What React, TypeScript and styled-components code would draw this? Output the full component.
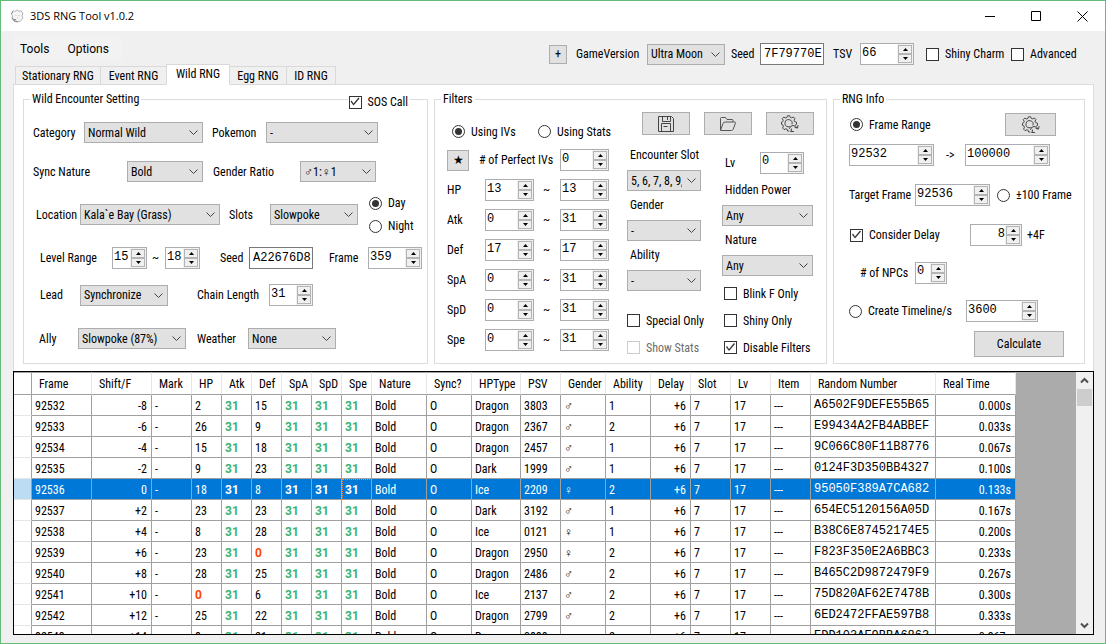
import React, { useState } from "react";
import styled, { createGlobalStyle, css } from "styled-components";

const UI_FONT = `"Roboto Condensed", Roboto, "Liberation Sans", sans-serif`;
const MONO_FONT = `"Liberation Mono", "DejaVu Sans Mono", monospace`;

const GlobalStyle = createGlobalStyle`
  *, *::before, *::after { box-sizing: border-box; }
  body { margin: 0; background: #f0f0f0; }
  body, input, select, button { font-family: ${UI_FONT}; font-size: 12px; line-height: 14px; color: #000; }
`;

/* ---------- window chrome ---------- */

const Window = styled.div`
  display: flex;
  flex-direction: column;
  height: 100vh;
  min-height: 560px;
  min-width: 1080px;
  border: 1px solid #62bd78;
  background: #f0f0f0;
`;

const TitleBar = styled.header`
  display: flex;
  align-items: center;
  height: 30px;
  flex: none;
  padding: 0 11px 0 8px;
  background: #fff;
`;

const Title = styled.h1`
  margin: 0 auto 0 5px;
  font: 400 11px/16px "Open Sans", "Noto Sans", sans-serif;
`;

const CaptionButton = styled.button`
  display: flex;
  align-items: center;
  justify-content: center;
  width: 46px;
  height: 28px;
  padding: 0;
  border: 0;
  background: none;
  &:last-child { width: 24px; margin-left: 11px; }
`;

const Header = styled.div`
  display: flex;
  justify-content: space-between;
  flex: none;
  padding: 0 26px 0 12px;
`;

const MenuBar = styled.nav`
  display: flex;
  align-items: center;
  width: 109px;
  height: 24px;
  margin: 6px 0 3px;
  background: #f2f2f2;
`;

const MenuItem = styled.button`
  padding: 0 7px;
  margin-right: 4px;
  border: 0;
  background: none;
  font: 12px/16px Roboto, sans-serif;
`;

const Toolbar = styled.div`
  display: grid;
  grid-template-columns: 27px 71px 84px 29px 73px 27px 66px 85px 68px;
  align-items: center;
  height: 22px;
  margin-top: 12px;
`;

const TabStrip = styled.div`
  position: relative;
  display: flex;
  align-items: flex-end;
  height: 21px;
  margin: 0 0 -1px 2px;
`;

const Tab = styled.button<{ $width: number; $active?: boolean }>`
  width: ${(p) => p.$width}px;
  height: 19px;
  margin-right: -1px;
  padding: 1px 0 0;
  border: 1px solid #d9d9d9;
  border-bottom-color: ${(p) => (p.$active ? "#fff" : "#d9d9d9")};
  background: ${(p) => (p.$active ? "#fff" : "#f0f0f0")};
  text-align: center;
  white-space: nowrap;
  ${(p) => p.$active && css`height: 21px; padding: 0 0 2px; z-index: 1;`}
`;

const Page = styled.main`
  display: flex;
  flex-direction: column;
  flex: 1;
  min-height: 0;
  padding: 0 11px 8px 12px;
`;

const TabPanel = styled.section`
  display: grid;
  grid-template-columns: 405fr 393fr 252fr;
  gap: 6px;
  flex: none;
  padding: 7px 8px 7px 9px;
  border: 1px solid #dcdcdc;
  border-bottom: 0;
  background: #fff;
`;

/* ---------- form parts ---------- */

const Group = styled.fieldset`
  position: relative;
  min-width: 0;
  margin: 0;
  padding: 0;
  border: 1px solid #dcdcdc;
`;

const Legend = styled.legend`
  margin-left: 6px;
  padding: 0 2px;
  line-height: 14px;
`;

const GroupCorner = styled.div`
  position: absolute;
  top: -11px;
  right: 17px;
  padding: 0 2px 0 1px;
  background: #fff;
`;

const Body = styled.div<{ $rows: string; $left: number; $top?: number }>`
  display: grid;
  grid-template-rows: ${(p) => p.$rows};
  align-items: center;
  height: 257px;
  padding: ${(p) => p.$top ?? 5}px 0 0 ${(p) => p.$left}px;
`;

const Row = styled.div<{ $cols: string }>`
  display: grid;
  grid-template-columns: ${(p) => p.$cols};
  align-items: center;
  white-space: nowrap;
`;

const Columns = styled.div`
  display: flex;
`;

const FilterSide = styled.div`
  width: 187px;
  margin-right: 5px;
`;

const IconRow = styled.div`
  display: flex;
  gap: 14px;
  padding: 6px 0 10px 15px;
`;

const Stack = styled.div<{ $width: number }>`
  display: flex;
  flex-direction: column;
  width: ${(p) => p.$width}px;
`;

const LevelRow = styled.div`
  display: grid;
  grid-template-columns: 38px auto;
  align-items: center;
  height: 35px;
`;

const StackedField = styled.div`
  display: flex;
  flex-direction: column;
  gap: 5px;
  margin-bottom: 4px;
`;

const StackLabel = styled.label`
  padding-left: 3px;
  line-height: 20px;
`;

const CheckList = styled.div<{ $pitch: number; $top?: number }>`
  display: grid;
  grid-auto-rows: ${(p) => p.$pitch}px;
  align-items: center;
  padding-top: ${(p) => p.$top ?? 0}px;
`;

const SelectBox = styled.div<{ $width: number }>`
  position: relative;
  width: ${(p) => p.$width}px;
  height: 21px;
  svg { position: absolute; right: 4px; top: 7px; pointer-events: none; }
`;

const NativeSelect = styled.select`
  appearance: none;
  display: block;
  width: 100%;
  height: 100%;
  margin: 0;
  padding: 0 18px 0 3px;
  border: 1px solid #adadad;
  border-radius: 0;
  background: #e1e1e1;
`;

const SpinBox = styled.div<{ $width: number }>`
  display: flex;
  width: ${(p) => p.$width}px;
  height: 22px;
  border: 1px solid #abadb3;
  background: #fff;
`;

const SpinInput = styled.input<{ $right?: boolean }>`
  appearance: textfield;
  flex: 1;
  min-width: 0;
  margin: 0;
  padding: 0 0 3px 1px;
  border: 0;
  outline: 0;
  background: none;
  font-family: ${MONO_FONT};
  text-align: ${(p) => (p.$right ? "right" : "left")};
  &::-webkit-inner-spin-button, &::-webkit-outer-spin-button { appearance: none; margin: 0; }
`;

const SpinButtons = styled.div`
  display: grid;
  grid-template-rows: 1fr 1fr;
  width: 16px;
  padding: 1px;
  background: #f0f0f0;
`;

const SpinButton = styled.button`
  display: flex;
  align-items: center;
  justify-content: center;
  padding: 0;
  border: 1px solid #b4b4b4;
  background: #f0f0f0;
`;

const HexInput = styled.input`
  width: 64px;
  height: 22px;
  padding: 0 0 1px 3px;
  border: 1px solid #7a7a7a;
  border-radius: 0;
  font-family: ${MONO_FONT};
`;

const CheckLabel = styled.label<{ $disabled?: boolean }>`
  display: inline-flex;
  align-items: center;
  gap: 6px;
  white-space: nowrap;
  color: ${(p) => (p.$disabled ? "#6d6d6d" : "#000")};
`;

const TickBox = styled.input`
  appearance: none;
  flex: none;
  width: 13px;
  height: 13px;
  margin: 0;
  border: 1px solid ${(p) => (p.disabled ? "#ccc" : "#333")};
  background: #fff;
  &:checked::before {
    content: "";
    display: block;
    width: 11px;
    height: 11px;
    background: #333;
    clip-path: polygon(1px 5px, 2px 4px, 4px 7px, 9px 1px, 10px 2px, 4px 9px);
  }
`;

const RadioDot = styled.input`
  appearance: none;
  display: grid;
  place-content: center;
  flex: none;
  width: 13px;
  height: 13px;
  margin: 0;
  border: 1px solid #333;
  border-radius: 50%;
  background: #fff;
  &:checked::before {
    content: "";
    width: 7px;
    height: 7px;
    border-radius: 50%;
    background: #333;
  }
`;

const PushButton = styled.button<{ $width: number; $height: number }>`
  display: flex;
  align-items: center;
  justify-content: center;
  width: ${(p) => p.$width}px;
  height: ${(p) => p.$height}px;
  padding: 0;
  border: 1px solid #adadad;
  background: #e1e1e1;
`;

/* ---------- result grid ---------- */

const GridBox = styled.section`
  display: flex;
  flex: 1;
  min-height: 0;
  border: 1px solid #000;
  background: #ababab;
`;

const GridView = styled.div`
  flex: 1;
  min-width: 0;
  overflow: hidden;
`;

const ResultTable = styled.table`
  width: 1002px;
  table-layout: fixed;
  border-collapse: separate;
  border-spacing: 0;
  background: #fff;
`;

const HeadCell = styled.th`
  height: 23px;
  padding: 0 0 0 7px;
  border-top: 1px solid #a0a0a0;
  border-right: 1px solid #e5e5e5;
  border-bottom: 1px solid #a0a0a0;
  font-weight: 400;
  text-align: left;
  white-space: nowrap;
  &:first-child { border-right-color: #a0a0a0; }
`;

type Tone = "best" | "worst" | "none";

const Cell = styled.td<{ $right?: boolean; $mono?: boolean; $tone?: Tone; $selected?: boolean; $focus?: boolean }>`
  height: 21px;
  padding: ${(p) => (p.$mono ? "0" : "2px")} 4px 0 3px;
  border-right: 1px solid #a0a0a0;
  border-bottom: 1px solid #a0a0a0;
  text-align: ${(p) => (p.$right ? "right" : "left")};
  white-space: nowrap;
  overflow: hidden;
  line-height: 14px;
  ${(p) => p.$mono && css`font-family: ${MONO_FONT};`}
  ${(p) => p.$tone === "best" && css`color: #3cb371; font-family: Roboto, sans-serif; font-weight: 700;`}
  ${(p) => p.$tone === "worst" && css`color: #ff4500; font-family: Roboto, sans-serif; font-weight: 700;`}
  ${(p) => p.$selected && css`color: #fff; background: #0078d7;`}
  ${(p) => p.$focus && css`outline: 1px dotted #ff8728; outline-offset: -1px;`}
`;

const RowHeader = styled.td<{ $selected?: boolean }>`
  height: 21px;
  padding: 0;
  border-right: 1px solid #a0a0a0;
  border-bottom: 1px solid #e5e5e5;
  background: ${(p) => (p.$selected ? "#bcdcf4" : "#fff")};
`;

const ScrollBar = styled.div`
  display: flex;
  flex-direction: column;
  width: 17px;
  background: #f0f0f0;
`;

const ScrollButton = styled.button`
  display: flex;
  align-items: center;
  justify-content: center;
  height: 17px;
  padding: 0;
  border: 0;
  background: none;
`;

const ScrollTrack = styled.div`
  flex: 1;
  padding: 0 1px;
`;

const ScrollThumb = styled.div`
  height: 17px;
  background: #cdcdcd;
`;

/* ---------- icons ---------- */

const SaveIcon = () => (
  <svg width="18" height="18" viewBox="0 0 18 18" fill="none" stroke="#444">
    <path d="M1.5 1.5h13l2 2v13h-15z" />
    <path d="M5.5 1.5v5h8v-5M10.5 2v3M4.5 16.5v-8h9v8M6.5 11.5h4" />
  </svg>
);

const FolderIcon = () => (
  <svg width="18" height="16" viewBox="0 0 18 16" fill="none" stroke="#555" strokeLinejoin="round">
    <path d="M1.5 14V2.5q0-1 1-1h4l1.500 2h5q1 0 1 1v1.500" />
    <path d="M1.500 14.500L4 7.500q.5-1.500 2-1.500h9.500q1.300 0 .9 1.300L14.200 13.200q-.5 1.300-1.700 1.300z" />
  </svg>
);

const GearIcon = () => (
  <svg width="18" height="18" viewBox="0 0 18 18" fill="none" stroke="#444" strokeLinejoin="round" strokeLinecap="round">
    <path d="M14.500 10l1-.6V7.200l-1.900-.6-.6-1.300.9-1.800-1.500-1.500-1.800.9-1.300-.5L8.700.8H6.500l-.6 1.700-1.300.5-1.800-.9-1.500 1.500.9 1.800-.5 1.300L.5 7.200v2.200l1.400.6.5 1.300-.8 1.800 1.500 1.500 1.800-.8 1.200.5.600 1.700h1.200" />
    <path d="M8.500 11.700l-1.500.1a3.600 3.600 0 1 1 4.100-2.800" />
    <path d="M8.500 13.500q.5-2.800 3.500-3 2.600 0 4 2M17 10.500l-.5 2.500-2.500-.5M10 16.500l.5-2.500M10 16.500h2.500" />
  </svg>
);

const MascotIcon = () => (
  <svg width="16" height="16" viewBox="0 0 16 16" fill="none" strokeLinejoin="round">
    <path d="M4 2.500l2 1 2-1.500 2 1.500 2-1 1 2 1 .5-1 3 1 2-2.500 3L8 14l-3-.8L3 10l.500-2-1-2z" fill="#f6f6f6" stroke="#b4b4b4" />
    <path d="M2.500 5.500l1.500-1.500M3 9.500l2.500 3.500 3 .5" stroke="#808080" />
    <path d="M7 7v1M10 7v1M8 10h1" stroke="#bbb" />
    <path d="M5 11.500h2" stroke="#a88" />
  </svg>
);

const Chevron = ({ up, bold }: { up?: boolean; bold?: boolean }) => (
  <svg width="11" height="7" viewBox="0 0 11 7" fill="none" stroke={bold ? "#505050" : "#444"} strokeWidth={bold ? 2 : 1}>
    <path d={bold ? (up ? "M2 5.500l3.500-3.500L9 5.500" : "M2 1.500L5.500 5 9 1.500") : "M1.500 1.500l4 4 4-4"} />
  </svg>
);

const Triangle = ({ up }: { up?: boolean }) => (
  <svg width="5" height="3" viewBox="0 0 5 3">
    <path d={up ? "M0 3h5L2.500 0z" : "M0 0h5L2.500 3z"} fill="#000" />
  </svg>
);

/* ---------- controls ---------- */

function Select({ id, value, width }: { id: string; value: string; width: number }) {
  return (
    <SelectBox $width={width}>
      <NativeSelect id={id} defaultValue={value}>
        <option value={value}>{value}</option>
      </NativeSelect>
      <Chevron />
    </SelectBox>
  );
}

function Spin({ id, initial, width, right, label }: { id: string; initial: number; width: number; right?: boolean; label?: string }) {
  const [value, setValue] = useState(initial);
  return (
    <SpinBox $width={width}>
      <SpinInput id={id} type="number" aria-label={label} $right={right} value={value} onChange={(e) => setValue(Number(e.target.value))} />
      <SpinButtons>
        <SpinButton type="button" aria-label="Increase" onClick={() => setValue(value + 1)}><Triangle up /></SpinButton>
        <SpinButton type="button" aria-label="Decrease" onClick={() => setValue(value - 1)}><Triangle /></SpinButton>
      </SpinButtons>
    </SpinBox>
  );
}

function Check({ text, checked, disabled }: { text: string; checked?: boolean; disabled?: boolean }) {
  return (
    <CheckLabel $disabled={disabled}>
      <TickBox type="checkbox" defaultChecked={checked} disabled={disabled} />
      {text}
    </CheckLabel>
  );
}

function Radio({ name, text, checked }: { name: string; text: string; checked?: boolean }) {
  return (
    <CheckLabel>
      <RadioDot type="radio" name={name} defaultChecked={checked} />
      {text}
    </CheckLabel>
  );
}

/* ---------- data ---------- */

const columns: [string, number][] = [
  ["", 18], ["Frame", 60], ["Shift/F", 60], ["Mark", 40], ["HP", 30], ["Atk", 30], ["Def", 30],
  ["SpA", 30], ["SpD", 30], ["Spe", 30], ["Nature", 55], ["Sync?", 45], ["HPType", 49], ["PSV", 40],
  ["Gender", 45], ["Ability", 45], ["Delay", 40], ["Slot", 40], ["Lv", 40], ["Item", 40],
  ["Random Number", 125], ["Real Time", 80],
];

const results = [
  { frame: 92532, shift: "-8", hp: 2, def: 15, type: "Dragon", psv: "3803", sex: "♂", ability: 1, random: "A6502F9DEFE55B65", time: "0.000s" },
  { frame: 92533, shift: "-6", hp: 26, def: 9, type: "Dragon", psv: "2367", sex: "♂", ability: 2, random: "E99434A2FB4ABBEF", time: "0.033s" },
  { frame: 92534, shift: "-4", hp: 15, def: 18, type: "Dragon", psv: "2457", sex: "♂", ability: 1, random: "9C066C80F11B8776", time: "0.067s" },
  { frame: 92535, shift: "-2", hp: 9, def: 23, type: "Dark", psv: "1999", sex: "♂", ability: 1, random: "0124F3D350BB4327", time: "0.100s" },
  { frame: 92536, shift: "0", hp: 18, def: 8, type: "Ice", psv: "2209", sex: "♀", ability: 2, random: "95050F389A7CA682", time: "0.133s" },
  { frame: 92537, shift: "+2", hp: 23, def: 23, type: "Dark", psv: "3192", sex: "♂", ability: 1, random: "654EC5120156A05D", time: "0.167s" },
  { frame: 92538, shift: "+4", hp: 8, def: 28, type: "Ice", psv: "0121", sex: "♀", ability: 1, random: "B38C6E87452174E5", time: "0.200s" },
  { frame: 92539, shift: "+6", hp: 23, def: 0, type: "Dragon", psv: "2950", sex: "♀", ability: 2, random: "F823F350E2A6BBC3", time: "0.233s" },
  { frame: 92540, shift: "+8", hp: 28, def: 25, type: "Dragon", psv: "2486", sex: "♂", ability: 2, random: "B465C2D9872479F9", time: "0.267s" },
  { frame: 92541, shift: "+10", hp: 0, def: 6, type: "Ice", psv: "2137", sex: "♂", ability: 2, random: "75D820AF62E7478B", time: "0.300s" },
  { frame: 92542, shift: "+12", hp: 25, def: 22, type: "Dragon", psv: "2799", sex: "♂", ability: 2, random: "6ED2472FFAE597B8", time: "0.333s" },
  { frame: 92543, shift: "+14", hp: 8, def: 21, type: "Dragon", psv: "0889", sex: "♀", ability: 2, random: "EDD103AE9BBA6863", time: "0.367s" },
];

const ivTone = (iv: number): Tone => (iv === 31 ? "best" : iv === 0 ? "worst" : "none");

const stats: [string, number, number][] = [
  ["HP", 13, 13], ["Atk", 0, 31], ["Def", 17, 17], ["SpA", 0, 31], ["SpD", 0, 31], ["Spe", 0, 31],
];

/* ---------- sections ---------- */

function EncounterGroup() {
  return (
    <Group>
      <Legend>Wild Encounter Setting</Legend>
      <GroupCorner><Check text="SOS Call" checked /></GroupCorner>
      <Body $left={9} $rows="43px 35px 51px 36px 38px 1fr">
        <Row $cols="51px 128px 54px auto">
          <label htmlFor="category">Category</label>
          <Select id="category" value="Normal Wild" width={119} />
          <label htmlFor="pokemon">Pokemon</label>
          <Select id="pokemon" value="-" width={112} />
        </Row>
        <Row $cols="94px 86px 87px auto">
          <label htmlFor="sync">Sync Nature</label>
          <Select id="sync" value="Bold" width={76} />
          <label htmlFor="ratio">Gender Ratio</label>
          <Select id="ratio" value="♂1:♀1" width={76} />
        </Row>
        <Row $cols="3px 44px 149px 41px 99px auto">
          <span />
          <label htmlFor="location">Location</label>
          <Select id="location" value="Kala`e Bay (Grass)" width={140} />
          <label htmlFor="slots">Slots</label>
          <Select id="slots" value="Slowpoke" width={88} />
          <CheckList $pitch={23}>
            <Radio name="time" text="Day" checked />
            <Radio name="time" text="Night" />
          </CheckList>
        </Row>
        <Row $cols="7px 72px 40px 13px 55px 29px 80px 39px auto">
          <span />
          <label htmlFor="levelMin">Level Range</label>
          <Spin id="levelMin" initial={15} width={35} />
          <span>~</span>
          <Spin id="levelMax" initial={18} width={35} label="Highest level" />
          <label htmlFor="sosSeed">Seed</label>
          <HexInput id="sosSeed" defaultValue="A22676D8" />
          <label htmlFor="sosFrame">Frame</label>
          <Spin id="sosFrame" initial={359} width={54} />
        </Row>
        <Row $cols="7px 40px 117px 72px auto">
          <span />
          <label htmlFor="lead">Lead</label>
          <Select id="lead" value="Synchronize" width={88} />
          <label htmlFor="chain">Chain Length</label>
          <Spin id="chain" initial={31} width={44} />
        </Row>
        <Row $cols="6px 39px 119px 51px auto">
          <span />
          <label htmlFor="ally">Ally</label>
          <Select id="ally" value="Slowpoke (87%)" width={108} />
          <label htmlFor="weather">Weather</label>
          <Select id="weather" value="None" width={88} />
        </Row>
      </Body>
    </Group>
  );
}

function FilterGroup() {
  return (
    <Group>
      <Legend>Filters</Legend>
      <Columns>
        <FilterSide>
          <Body $left={12} $top={12} $rows="27px repeat(7, 30px)">
            <Row $cols="5px 86px auto">
              <span />
              <Radio name="basis" text="Using IVs" checked />
              <Radio name="basis" text="Using Stats" />
            </Row>
            <Row $cols="32px 81px auto">
              <PushButton type="button" $width={22} $height={21}>★</PushButton>
              <label htmlFor="perfect"># of Perfect IVs</label>
              <Spin id="perfect" initial={0} width={49} />
            </Row>
            {stats.map(([name, low, high]) => (
              <Row key={name} $cols="38px 58px 17px auto">
                <label htmlFor={`low${name}`}>{name}</label>
                <Spin id={`low${name}`} initial={low} width={49} />
                <span>~</span>
                <Spin id={`high${name}`} initial={high} width={49} label={`${name} maximum`} />
              </Row>
            ))}
          </Body>
        </FilterSide>
        <div>
          <IconRow>
            <PushButton type="button" aria-label="Save filters" $width={48} $height={23}><SaveIcon /></PushButton>
            <PushButton type="button" aria-label="Load filters" $width={48} $height={23}><FolderIcon /></PushButton>
            <PushButton type="button" aria-label="Reset filters" $width={48} $height={23}><GearIcon /></PushButton>
          </IconRow>
          <Columns>
            <Stack $width={95}>
              <StackedField>
                <StackLabel htmlFor="slot">Encounter Slot</StackLabel>
                <Select id="slot" value="5, 6, 7, 8, 9, 10" width={74} />
              </StackedField>
              <StackedField>
                <StackLabel htmlFor="gender">Gender</StackLabel>
                <Select id="gender" value="-" width={74} />
              </StackedField>
              <StackedField>
                <StackLabel htmlFor="ability">Ability</StackLabel>
                <Select id="ability" value="-" width={74} />
              </StackedField>
              <CheckList $pitch={27} $top={12}>
                <Check text="Special Only" />
                <Check text="Show Stats" disabled />
              </CheckList>
            </Stack>
            <Stack $width={91}>
              <LevelRow>
                <StackLabel htmlFor="lv">Lv</StackLabel>
                <Spin id="lv" initial={0} width={44} />
              </LevelRow>
              <StackedField>
                <StackLabel htmlFor="power">Hidden Power</StackLabel>
                <Select id="power" value="Any" width={91} />
              </StackedField>
              <StackedField>
                <StackLabel htmlFor="nature">Nature</StackLabel>
                <Select id="nature" value="Any" width={91} />
              </StackedField>
              <Row $cols="2px auto">
                <span />
                <CheckList $pitch={27}>
                  <Check text="Blink F Only" />
                  <Check text="Shiny Only" />
                  <Check text="Disable Filters" checked />
                </CheckList>
              </Row>
            </Stack>
          </Columns>
        </div>
      </Columns>
    </Group>
  );
}

function InfoGroup() {
  return (
    <Group>
      <Legend>RNG Info</Legend>
      <Body $left={15} $rows="27px 34px 46px 34px 41px 36px 30px">
        <Row $cols="1px 155px auto">
          <span />
          <Radio name="mode" text="Frame Range" checked />
          <PushButton type="button" aria-label="Reset frames" $width={51} $height={23}><GearIcon /></PushButton>
        </Row>
        <Row $cols="97px 19px auto">
          <Spin id="frameMin" initial={92532} width={85} label="First frame" />
          <span>-&gt;</span>
          <Spin id="frameMax" initial={100000} width={85} label="Last frame" />
        </Row>
        <Row $cols="66px 82px auto">
          <label htmlFor="target">Target Frame</label>
          <Spin id="target" initial={92536} width={75} />
          <Radio name="mode" text="±100 Frame" />
        </Row>
        <Row $cols="1px 120px 57px auto">
          <span />
          <Check text="Consider Delay" checked />
          <Spin id="delay" initial={8} width={52} right label="Delay" />
          <span>+4F</span>
        </Row>
        <Row $cols="11px 55px auto">
          <span />
          <label htmlFor="npcs"># of NPCs</label>
          <Spin id="npcs" initial={0} width={32} />
        </Row>
        <Row $cols="117px auto">
          <Radio name="mode" text="Create Timeline/s" />
          <Spin id="timeline" initial={3600} width={72} label="Timeline seconds" />
        </Row>
        <Row $cols="125px auto">
          <span />
          <PushButton type="button" $width={90} $height={26}>Calculate</PushButton>
        </Row>
      </Body>
    </Group>
  );
}

function ResultGrid() {
  return (
    <GridBox>
      <GridView>
        <ResultTable>
          <colgroup>
            {columns.map(([name, width]) => <col key={name} width={width} />)}
          </colgroup>
          <thead>
            <tr>{columns.map(([name]) => <HeadCell key={name}>{name}</HeadCell>)}</tr>
          </thead>
          <tbody>
            {results.map((r) => {
              const on = r.frame === 92536;
              return (
                <tr key={r.frame}>
                  <RowHeader $selected={on} />
                  <Cell $selected={on}>{r.frame}</Cell>
                  <Cell $selected={on} $right>{r.shift}</Cell>
                  <Cell $selected={on}>-</Cell>
                  {[r.hp, 31, r.def, 31, 31, 31].map((iv, i) => (
                    <Cell key={i} $selected={on} $tone={ivTone(iv)} $focus={on && i === 5}>{iv}</Cell>
                  ))}
                  <Cell $selected={on}>Bold</Cell>
                  <Cell $selected={on}>O</Cell>
                  <Cell $selected={on}>{r.type}</Cell>
                  <Cell $selected={on}>{r.psv}</Cell>
                  <Cell $selected={on}>{r.sex}</Cell>
                  <Cell $selected={on}>{r.ability}</Cell>
                  <Cell $selected={on} $right>+6</Cell>
                  <Cell $selected={on}>7</Cell>
                  <Cell $selected={on}>17</Cell>
                  <Cell $selected={on}>---</Cell>
                  <Cell $selected={on} $mono>{r.random}</Cell>
                  <Cell $selected={on} $right>{r.time}</Cell>
                </tr>
              );
            })}
          </tbody>
        </ResultTable>
      </GridView>
      <ScrollBar>
        <ScrollButton type="button" aria-label="Scroll up"><Chevron up bold /></ScrollButton>
        <ScrollTrack><ScrollThumb /></ScrollTrack>
        <ScrollButton type="button" aria-label="Scroll down"><Chevron bold /></ScrollButton>
      </ScrollBar>
    </GridBox>
  );
}

const tabs: [string, number][] = [
  ["Stationary RNG", 86], ["Event RNG", 67], ["Wild RNG", 64], ["Egg RNG", 58], ["ID RNG", 50],
];

export default function App() {
  return (
    <>
      <GlobalStyle />
      <Window>
        <TitleBar>
          <MascotIcon />
          <Title>3DS RNG Tool v1.0.2</Title>
          <CaptionButton type="button" aria-label="Minimize">
            <svg width="11" height="11" viewBox="0 0 11 11" stroke="#000"><path d="M0 5.500h10" /></svg>
          </CaptionButton>
          <CaptionButton type="button" aria-label="Maximize">
            <svg width="11" height="11" viewBox="0 0 11 11" stroke="#000" fill="none"><path d="M.5.5h9v9h-9z" /></svg>
          </CaptionButton>
          <CaptionButton type="button" aria-label="Close">
            <svg width="11" height="11" viewBox="0 0 11 11" stroke="#000"><path d="M.5.5l10 10M10.500.5l-10 10" /></svg>
          </CaptionButton>
        </TitleBar>
        <Header>
          <div>
            <MenuBar>
              <MenuItem type="button">Tools</MenuItem>
              <MenuItem type="button">Options</MenuItem>
            </MenuBar>
            <TabStrip role="tablist">
              {tabs.map(([name, width]) => (
                <Tab key={name} type="button" role="tab" $width={width} $active={name === "Wild RNG"} aria-selected={name === "Wild RNG"}>{name}</Tab>
              ))}
            </TabStrip>
          </div>
          <Toolbar>
            <PushButton type="button" $width={18} $height={19}>+</PushButton>
            <label htmlFor="version">GameVersion</label>
            <Select id="version" value="Ultra Moon" width={78} />
            <label htmlFor="seed">Seed</label>
            <HexInput id="seed" defaultValue="7F79770E" />
            <label htmlFor="tsv">TSV</label>
            <Spin id="tsv" initial={66} width={54} />
            <Check text="Shiny Charm" />
            <Check text="Advanced" />
          </Toolbar>
        </Header>
        <Page>
          <TabPanel>
            <EncounterGroup />
            <FilterGroup />
            <InfoGroup />
          </TabPanel>
          <ResultGrid />
        </Page>
      </Window>
    </>
  );
}
